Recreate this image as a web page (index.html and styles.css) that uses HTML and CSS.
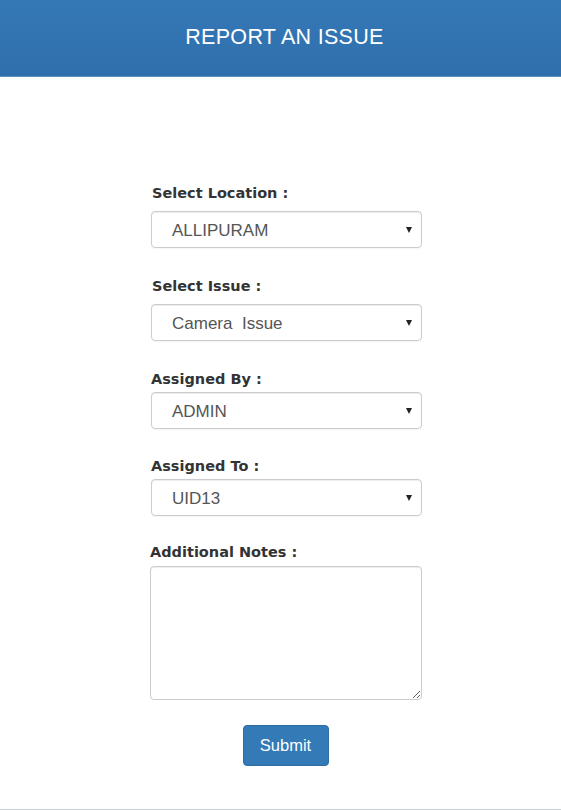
FILE: index.html
```html
<!DOCTYPE html>
<html lang="en">
<head>
<meta charset="utf-8">
<title>Report an Issue</title>
<link rel="stylesheet" href="styles.css">
</head>
<body>
<div class="page">
  <header class="topbar">
    <h1 class="topbar__title">REPORT AN ISSUE</h1>
  </header>
  <form class="issue-form">
    <div class="field field--first">
      <label class="field__label field__label--loose">Select Location :</label>
      <div class="select"><span class="select__value">ALLIPURAM</span></div>
    </div>
    <div class="field field--second">
      <label class="field__label field__label--loose">Select Issue :</label>
      <div class="select"><span class="select__value">Camera&nbsp; Issue</span></div>
    </div>
    <div class="field field--third">
      <label class="field__label">Assigned By :</label>
      <div class="select"><span class="select__value">ADMIN</span></div>
    </div>
    <div class="field">
      <label class="field__label">Assigned To :</label>
      <div class="select"><span class="select__value">UID13</span></div>
    </div>
    <div class="field field--notes">
      <label class="field__label field__label--notes">Additional Notes :</label>
      <textarea class="notes"></textarea>
    </div>
    <div class="actions">
      <button type="button" class="btn-submit">Submit</button>
    </div>
  </form>
  <div class="bottom-rule"></div>
</div>
</body>
</html>
```

FILE: styles.css
```css
* { box-sizing: border-box; }
html, body { margin: 0; padding: 0; background: #fff; }
body { font-family: "Liberation Sans", Arial, sans-serif; color: #333; }

.page { display: flex; flex-direction: column; min-height: 810px; }

.topbar {
  height: 77px;
  background: linear-gradient(to bottom, #3579b7 0%, #2f6fab 100%);
  border-bottom: 1px solid #5d8fbf;
  display: flex;
  align-items: center;
  justify-content: center;
}
.topbar__title {
  margin: 0;
  font-size: 21.5px;
  font-weight: normal;
  color: #fff;
  letter-spacing: 0.3px;
  padding-bottom: 1px;
  padding-left: 8px;
}

.issue-form {
  width: 272px;
  margin-left: 150px;
  display: flex;
  flex-direction: column;
  padding-top: 106px;
}

.field { display: flex; flex-direction: column; margin-top: 27px; }
.field--first { margin-top: 0; }
.field--second { margin-top: 28px; }
.field--third { margin-top: 28px; }
.field--notes { margin-top: 26px; }

.field__label {
  font-family: "DejaVu Sans", "Liberation Sans", Arial, sans-serif;
  font-size: 14.5px;
  font-weight: bold;
  line-height: 20px;
  color: #333;
  padding-left: 1px;
  margin-bottom: 3px;
}
.field__label--loose { padding-left: 2px; margin-bottom: 8px; }
.field__label--notes { padding-left: 0; margin-bottom: 4px; }

.select {
  position: relative;
  height: 37px;
  width: 271px;
  margin-left: 1px;
  border: 1px solid #ccc;
  border-radius: 4px;
  box-shadow: inset 0 1px 1px rgba(0,0,0,.075), 0 1px 1px rgba(0,0,0,.04);
  display: flex;
  align-items: center;
  padding-left: 20px;
  padding-top: 2px;
}
.select__value { font-size: 17px; color: #555; }
.select::after {
  content: "";
  position: absolute;
  right: 9px;
  top: 15px;
  border-left: 3.5px solid transparent;
  border-right: 3.5px solid transparent;
  border-top: 6px solid #222;
}

.notes {
  width: 272px;
  height: 134px;
  border: 1px solid #ccc;
  border-radius: 4px;
  box-shadow: inset 0 1px 1px rgba(0,0,0,.075);
  resize: both;
  font-family: inherit;
  margin: 0;
}

.actions { display: flex; justify-content: center; margin-top: 25px; padding-right: 1px; }
.btn-submit {
  width: 86px;
  height: 41px;
  background: #337ab7;
  border: 1px solid #2e6da4;
  border-radius: 4px;
  color: #fff;
  font-family: "Liberation Sans", Arial, sans-serif;
  font-size: 16.5px;
  padding: 0;
}

.bottom-rule {
  margin-top: auto;
  height: 1px;
  background: #c9d0d4;
}
```
